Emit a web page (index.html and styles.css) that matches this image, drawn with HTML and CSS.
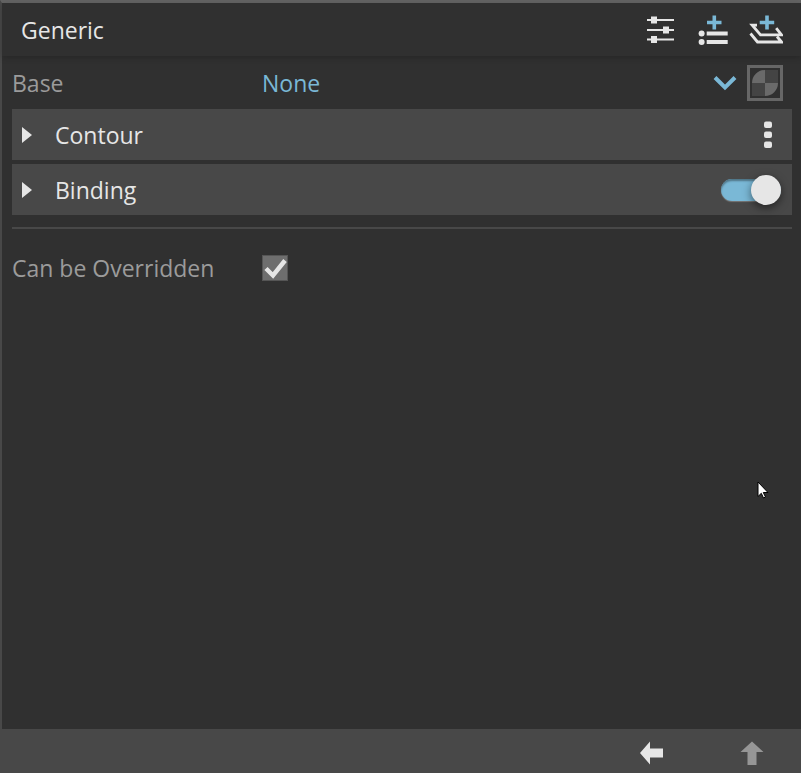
FILE: index.html
```
<!DOCTYPE html>
<html lang="en">
<head>
    <meta charset="utf-8">
    <title>Generic</title>
    <link rel="stylesheet" href="styles.css">
</head>
<body>
    <main class="panel">
        <header class="panel-header">
            <h1 class="panel-title">Generic</h1>
            <div class="toolbar">
                <button class="icon-button" type="button" aria-label="Settings">
                    <svg width="34" height="34" viewBox="0 0 34 34">
                        <path d="M4 7h27M4 17h27M4 26.500h27" stroke="#e6e6e6" stroke-width="2"/>
                        <path d="M8 3.500h6v7H8zM20 13.500h6v7h-6zM8 23h6v7H8z" fill="#e6e6e6"/>
                    </svg>
                </button>
                <button class="icon-button" type="button" aria-label="Add item">
                    <svg width="34" height="34" viewBox="0 0 34 34">
                        <path d="M18.300 2.500v14M11 9.500h14.500" stroke="#7ab8d6" stroke-width="3.600"/>
                        <path d="M10.700 20.500h21M10.700 29h21" stroke="#e6e6e6" stroke-width="4"/>
                        <circle cx="5.600" cy="20.600" r="3" fill="#e6e6e6"/>
                        <circle cx="5.600" cy="29" r="3" fill="#e6e6e6"/>
                    </svg>
                </button>
                <button class="icon-button" type="button" aria-label="Add layer">
                    <svg width="34" height="34" viewBox="0 0 34 34">
                        <path d="M18 2.500v14M10.700 9.500h14.500" stroke="#7ab8d6" stroke-width="3.600"/>
                        <g fill="none" stroke="#e6e6e6" stroke-width="2.800">
                            <path d="M8 12.200H3.200L11.500 21.800H32.500L27.200 15.200"/>
                            <path d="M1.500 20.500L8.500 29H32.500L28 23.500"/>
                        </g>
                    </svg>
                </button>
            </div>
        </header>

        <section class="panel-body">
            <div class="field base-field">
                <label for="base">Base</label>
                <div class="select-box">
                    <select id="base" class="select">
                        <option>None</option>
                    </select>
                    <svg class="chevron" width="24" height="16" viewBox="0 0 24 16">
                        <path d="M2 2.500L12 12.500L22 2.500" fill="none" stroke="#7ab8d6" stroke-width="4"/>
                    </svg>
                </div>
                <button class="swatch" type="button" aria-label="Material">
                    <svg width="30" height="30" viewBox="0 0 30 30">
                        <path d="M2 2h26v26H2z" fill="#444"/>
                        <path d="M2 2h13v13H2zM15 15h13v13H15z" fill="#303030"/>
                        <path d="M15 15H2A13 13 0 0 1 15 2zM15 15h13A13 13 0 0 1 15 28z" fill="#6a6a6a"/>
                    </svg>
                </button>
            </div>

            <div class="group">
                <button class="group-toggle" type="button" aria-expanded="false">
                    <svg width="10" height="16" viewBox="0 0 10 16"><path d="M0 0l10 8L0 16z" fill="#e6e6e6"/></svg>
                    Contour
                </button>
                <button class="more" type="button" aria-label="More">
                    <svg width="8" height="28" viewBox="0 0 8 28" fill="#e6e6e6">
                        <rect y="0.500" width="8" height="6.500" rx="2"/>
                        <rect y="10.500" width="8" height="6.500" rx="2"/>
                        <rect y="20.500" width="8" height="6.500" rx="2"/>
                    </svg>
                </button>
            </div>

            <div class="group">
                <button class="group-toggle" type="button" aria-expanded="false">
                    <svg width="10" height="16" viewBox="0 0 10 16"><path d="M0 0l10 8L0 16z" fill="#e6e6e6"/></svg>
                    Binding
                </button>
                <input class="switch" type="checkbox" role="switch" aria-label="Binding" checked>
            </div>

            <hr class="divider">

            <div class="field">
                <label for="overridden">Can be Overridden</label>
                <div class="check-box">
                    <input id="overridden" class="check" type="checkbox" checked>
                    <svg class="check-mark" width="26" height="26" viewBox="0 0 26 26">
                        <path d="M4 13.500l7 7L23 5.500" fill="none" stroke="#e6e6e6" stroke-width="4.500"/>
                    </svg>
                </div>
            </div>
        </section>

        <footer class="panel-footer">
            <button class="nav-button" type="button" aria-label="Back">
                <svg width="24" height="24" viewBox="0 0 24 24"><path d="M0 12L10 0.500V7.500H23V16.500H10V23.500z" fill="#e6e6e6"/></svg>
            </button>
            <button class="nav-button" type="button" aria-label="Up" disabled>
                <svg width="24" height="24" viewBox="0 0 24 24"><path d="M12 0.500L23.500 11H16.500V24H7.500V11H0.500z" fill="#969696"/></svg>
            </button>
        </footer>
    </main>

    <svg class="pointer" width="13" height="18" viewBox="0 0 13 18">
        <path d="M1 1v14.500l3.300-3.200 2.200 4.700 2-1-2.200-4.500H11z" fill="#fff" stroke="#000" stroke-width="1"/>
    </svg>
</body>
</html>
```
FILE: styles.css
```
* {
    box-sizing: border-box;
}
body {
    margin: 0;
    background: #303030;
    color: #e6e6e6;
    font: 23px/32px "Open Sans", "Noto Sans", sans-serif;
}
button, select, input {
    margin: 0;
    padding: 0;
    border: 0;
    background: none;
    color: inherit;
    font: inherit;
}
svg {
    display: block;
}

.panel {
    display: flex;
    flex-direction: column;
    min-height: 100vh;
    border-top: 3px solid #636363;
    border-left: 2px solid #484848;
}
.panel-header {
    display: flex;
    align-items: center;
    justify-content: space-between;
    height: 53px;
    padding: 0 18px 0 19px;
    box-shadow: 0 2px 6px rgba(0, 0, 0, 0.2);
}
.panel-title {
    margin: 0;
    font-size: 23px;
    font-weight: 400;
}
.toolbar {
    display: flex;
    gap: 19px;
}

.panel-body {
    flex: 1;
    padding: 0 9px 0 10px;
}
.field {
    display: grid;
    grid-template-columns: 250px 1fr auto;
    align-items: center;
    color: #9b9b9b;
}
.base-field {
    height: 53px;
    padding-right: 9px;
}
.select-box {
    display: grid;
    align-items: center;
    color: #7ab8d6;
}
.select, .chevron {
    grid-area: 1 / 1;
}
.select {
    appearance: none;
    width: 100%;
}
.chevron {
    justify-self: end;
    margin-right: 10px;
    pointer-events: none;
}
.swatch {
    border: 3px solid #666;
}

.group {
    display: flex;
    align-items: center;
    height: 51px;
    margin-bottom: 4px;
    padding-right: 11px;
    background: #484848;
}
.group-toggle {
    display: flex;
    flex: 1;
    align-items: center;
    gap: 23px;
    height: 100%;
    padding-left: 10px;
}
.more {
    padding: 0 9px;
}
.switch {
    appearance: none;
    display: flex;
    align-items: center;
    justify-content: flex-end;
    width: 60px;
    height: 22px;
    border-radius: 11px;
    background: #7ab8d6;
    box-shadow: inset 0 2px 2px #4f7486, 0 1px 1px #777;
}
.switch::before {
    content: "";
    flex: none;
    width: 30px;
    height: 30px;
    border-radius: 50%;
    background: #e6e6e6;
    box-shadow: 0 3px 8px rgba(0, 0, 0, 0.5);
}
.divider {
    height: 2px;
    margin: 12px 0 23px;
    border: 0;
    background: #484848;
}

.check-box {
    display: grid;
    justify-content: start;
}
.check, .check-mark {
    grid-area: 1 / 1;
    width: 26px;
    height: 26px;
}
.check {
    appearance: none;
    border: 1px solid #555;
    background: #6e6e6e;
}
.check-mark {
    visibility: hidden;
    pointer-events: none;
}
.check:checked + .check-mark {
    visibility: visible;
}

.panel-footer {
    display: flex;
    align-items: center;
    justify-content: flex-end;
    gap: 76px;
    height: 44px;
    padding: 4px 37px 0 0;
    background: #484848;
}

.pointer {
    position: absolute;
    top: 481px;
    left: 757px;
    pointer-events: none;
}
```
